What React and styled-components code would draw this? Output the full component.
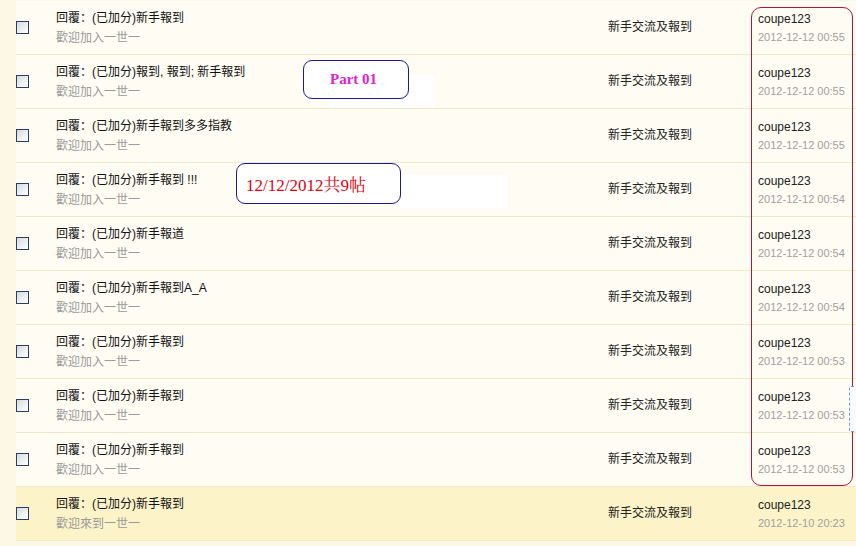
import React from "react";
import styled, { createGlobalStyle } from "styled-components";

const Global = createGlobalStyle`
  html, body { margin: 0; padding: 0; background: #fdf7e6; }
  body { width: 856px; height: 546px; overflow: hidden; font-family: "Liberation Sans", "Noto Sans CJK SC", sans-serif; }
`;

const Page = styled.div`
  position: relative;
  width: 856px;
  height: 546px;
  padding-left: 16px;
  padding-top: 1px;
  box-sizing: border-box;
  background: #fdf7e6;
`;

const Table = styled.div`
  display: flex;
  flex-direction: column;
  background: #fffcf4;
`;

const Row = styled.div`
  display: grid;
  grid-template-columns: 40px 552px 150px 1fr;
  align-items: center;
  height: 54px;
  box-sizing: border-box;
  border-bottom: 1px solid #f1e8c6;
  background: ${(p) => (p.$hl ? "#fdf3c8" : "#fffcf4")};
`;

const Check = styled.span`
  display: block;
  width: 13px;
  height: 13px;
  box-sizing: border-box;
  border: 1px solid #2a3f66;
  background: linear-gradient(135deg, #d4d8de 0%, #eef0f2 55%, #ffffff 100%);
`;

const Stack = styled.div`
  display: flex;
  flex-direction: column;
  gap: 6px;
`;

const Title = styled.div`
  font-size: 12px;
  line-height: 14px;
  color: #111;
`;

const Sub = styled.div`
  font-size: 12px;
  line-height: 14px;
  color: #9a9a9a;
`;

const Forum = styled.div`
  font-size: 12px;
  color: #222;
  padding-bottom: 4px;
`;

const Author = styled.div`
  font-size: 12px;
  line-height: 14px;
  color: #222;
`;

const DateText = styled.div`
  font-size: 11px;
  line-height: 13px;
  color: #a0a0a0;
`;

const AuthorStack = styled.div`
  display: flex;
  flex-direction: column;
  gap: 5px;
  padding-top: 1px;
`;

const RedFrame = styled.div`
  position: absolute;
  left: 751px;
  top: 7px;
  width: 102px;
  height: 479px;
  box-sizing: border-box;
  border: 1px solid #b0163a;
  border-radius: 10px;
  pointer-events: none;
`;

const WhitePatch = styled.div`
  position: absolute;
  background: #ffffff;
`;

const Note = styled.div`
  position: absolute;
  box-sizing: border-box;
  border: 1px solid #1a1a9a;
  border-radius: 9px;
  background: #ffffff;
  display: flex;
  align-items: center;
  font-family: "Liberation Serif", "Noto Serif CJK TC", "Noto Sans CJK TC", serif;
  color: ${(p) => p.$color};
  font-size: ${(p) => p.$size}px;
  font-weight: ${(p) => (p.$bold ? 700 : 400)};
`;

const EdgeBox = styled.div`
  position: absolute;
  left: 849px;
  top: 386px;
  width: 12px;
  height: 46px;
  box-sizing: border-box;
  border: 1px dashed #6d9fd6;
  border-radius: 2px;
  background: #f8fbff;
`;

const rows = [
  { t: "回覆：(已加分)新手報到", s: "歡迎加入一世一", d: "2012-12-12 00:55" },
  { t: "回覆：(已加分)報到, 報到; 新手報到", s: "歡迎加入一世一", d: "2012-12-12 00:55" },
  { t: "回覆：(已加分)新手報到多多指教", s: "歡迎加入一世一", d: "2012-12-12 00:55" },
  { t: "回覆：(已加分)新手報到 !!!", s: "歡迎加入一世一", d: "2012-12-12 00:54" },
  { t: "回覆：(已加分)新手報道", s: "歡迎加入一世一", d: "2012-12-12 00:54" },
  { t: "回覆：(已加分)新手報到A_A", s: "歡迎加入一世一", d: "2012-12-12 00:54" },
  { t: "回覆：(已加分)新手報到", s: "歡迎加入一世一", d: "2012-12-12 00:53" },
  { t: "回覆：(已加分)新手報到", s: "歡迎加入一世一", d: "2012-12-12 00:53" },
  { t: "回覆：(已加分)新手報到", s: "歡迎加入一世一", d: "2012-12-12 00:53" },
  { t: "回覆：(已加分)新手報到", s: "歡迎來到一世一", d: "2012-12-10 20:23", hl: true },
];

export default function App() {
  return (
    <>
      <Global />
      <Page>
        <Table>
          {rows.map((r, i) => (
            <Row key={i} $hl={r.hl}>
              <Check />
              <Stack>
                <Title>{r.t}</Title>
                <Sub>{r.s}</Sub>
              </Stack>
              <Forum>新手交流及報到</Forum>
              <AuthorStack>
                <Author>coupe123</Author>
                <DateText>{r.d}</DateText>
              </AuthorStack>
            </Row>
          ))}
        </Table>
        <RedFrame />
        <WhitePatch style={{ left: 329, top: 75, width: 105, height: 33 }} />
        <Note $color="#e01ed6" $size={15} $bold style={{ left: 303, top: 60, width: 106, height: 39, paddingLeft: 26 }}>
          Part 01
        </Note>
        <WhitePatch style={{ left: 400, top: 175, width: 108, height: 33 }} />
        <Note $color="#e0000f" $size={17} style={{ left: 236, top: 163, width: 165, height: 41, paddingLeft: 9 }}>
          12/12/2012共9帖
        </Note>
        <EdgeBox />
      </Page>
    </>
  );
}
